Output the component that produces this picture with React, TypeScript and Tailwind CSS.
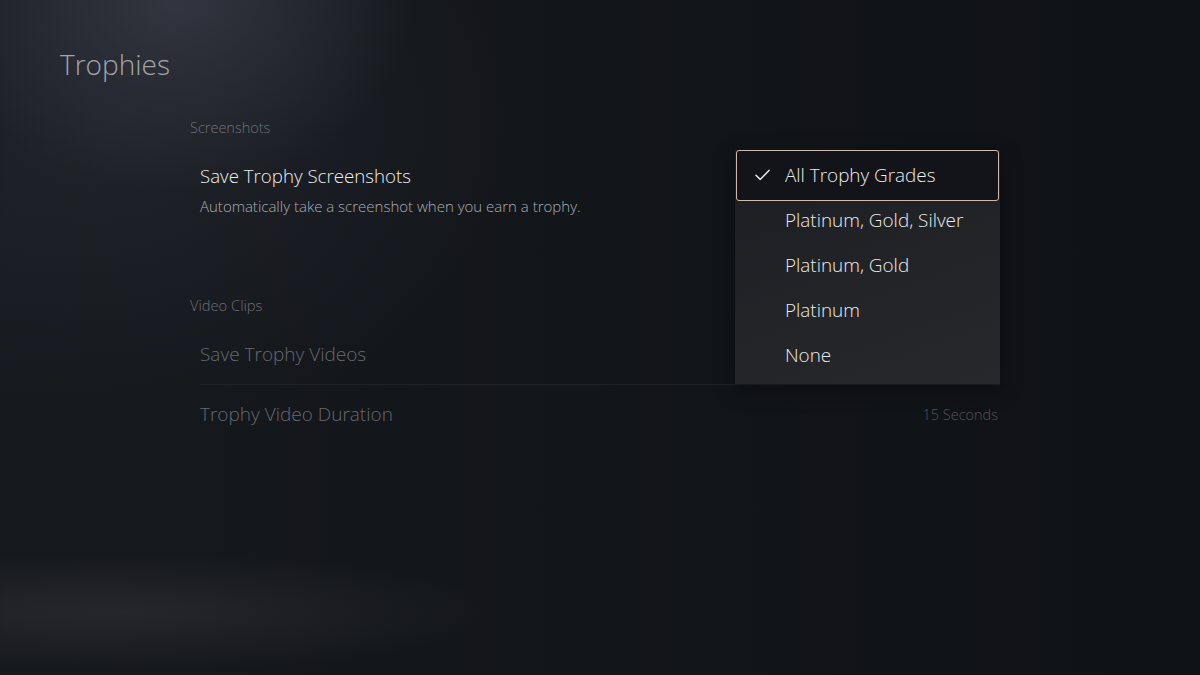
import React from "react";

const options = [
  "All Trophy Grades",
  "Platinum, Gold, Silver",
  "Platinum, Gold",
  "Platinum",
  "None",
];

function Check() {
  return (
    <svg width="15" height="12" viewBox="0 0 15 12" fill="none" className="shrink-0">
      <path d="M1 6.3 L5.2 10.4 L14 1.4" stroke="#e6e6e6" strokeWidth="1.5" strokeLinecap="round" strokeLinejoin="round" />
    </svg>
  );
}

export default function App() {
  return (
    <div
      className="relative w-[1200px] h-[675px] overflow-hidden bg-[#111419] text-white"
      style={{ fontFamily: '"Open Sans", "Noto Sans", sans-serif' }}
    >
      {/* ambient lighting */}
      <div className="absolute inset-0 bg-[radial-gradient(ellipse_240px_190px_at_175px_0px,rgba(74,78,92,0.6),transparent)]" />
      <div className="absolute inset-0 bg-[radial-gradient(ellipse_420px_300px_at_120px_120px,rgba(40,43,52,0.5),transparent)]" />
      <div className="absolute inset-0 bg-[radial-gradient(ellipse_380px_60px_at_120px_612px,rgba(48,48,54,0.55),transparent)]" />
      <div className="absolute inset-0 bg-[linear-gradient(90deg,rgba(255,255,255,0.02),rgba(0,0,0,0.12))]" />

      <div className="relative flex flex-col font-light">
        <h1 className="pl-[60px] pt-[44px] text-[28px] leading-[40px] font-light text-[#a3a5ab]">
          Trophies
        </h1>

        <div className="ml-[190px] w-[810px] mt-[34px] flex flex-col">
          <div className="text-[14.5px] leading-[20px] text-[#6d7077]">Screenshots</div>

          <div className="mt-[25px] pl-[10px]">
            <div className="text-[18.7px] leading-[26px] text-[#ededed]">Save Trophy Screenshots</div>
            <div className="mt-[7px] text-[15px] leading-[20px] text-[#abadb3]">
              Automatically take a screenshot when you earn a trophy.
            </div>
          </div>

          <div className="mt-[79px] text-[14.7px] leading-[20px] text-[#6d7077]">Video Clips</div>

          <div className="ml-[10px] mt-[17px] h-[53px] flex items-start border-b border-[#1f2228]">
            <span className="pt-[9px] text-[19px] leading-[26px] text-[#66696f]">Save Trophy Videos</span>
          </div>
          <div className="ml-[10px] h-[58px] flex items-start justify-between">
            <span className="pt-[16px] text-[19px] leading-[26px] text-[#66696f]">Trophy Video Duration</span>
            <span className="pt-[20px] pr-[2px] text-[14.5px] leading-[20px] text-[#52555b]">15 Seconds</span>
          </div>
        </div>
      </div>

      {/* option list popup */}
      <div className="absolute left-[735px] top-[150px] w-[265px] h-[234px] pt-[2.5px] font-light bg-[linear-gradient(160deg,#1b1d22_0%,#222428_55%,#26282c_100%)] shadow-[0_6px_20px_rgba(0,0,0,0.35)] flex flex-col">
        {options.map((o, i) => (
          <div
            key={o}
            className="relative h-[45px] shrink-0 flex items-center pl-[50px] text-[18.9px] text-[#ececec]"
          >
            {i === 0 && (
              <>
                <div className="absolute left-[1px] right-[1px] top-[-2.5px] bottom-[-3.5px] rounded-[3px] border-[1.5px] border-[#cdbcad] bg-[#121419]" />
                <div className="absolute left-[20px] top-1/2 -translate-y-1/2 flex">
                  <Check />
                </div>
              </>
            )}
            <span className="relative">{o}</span>
          </div>
        ))}
      </div>
    </div>
  );
}
